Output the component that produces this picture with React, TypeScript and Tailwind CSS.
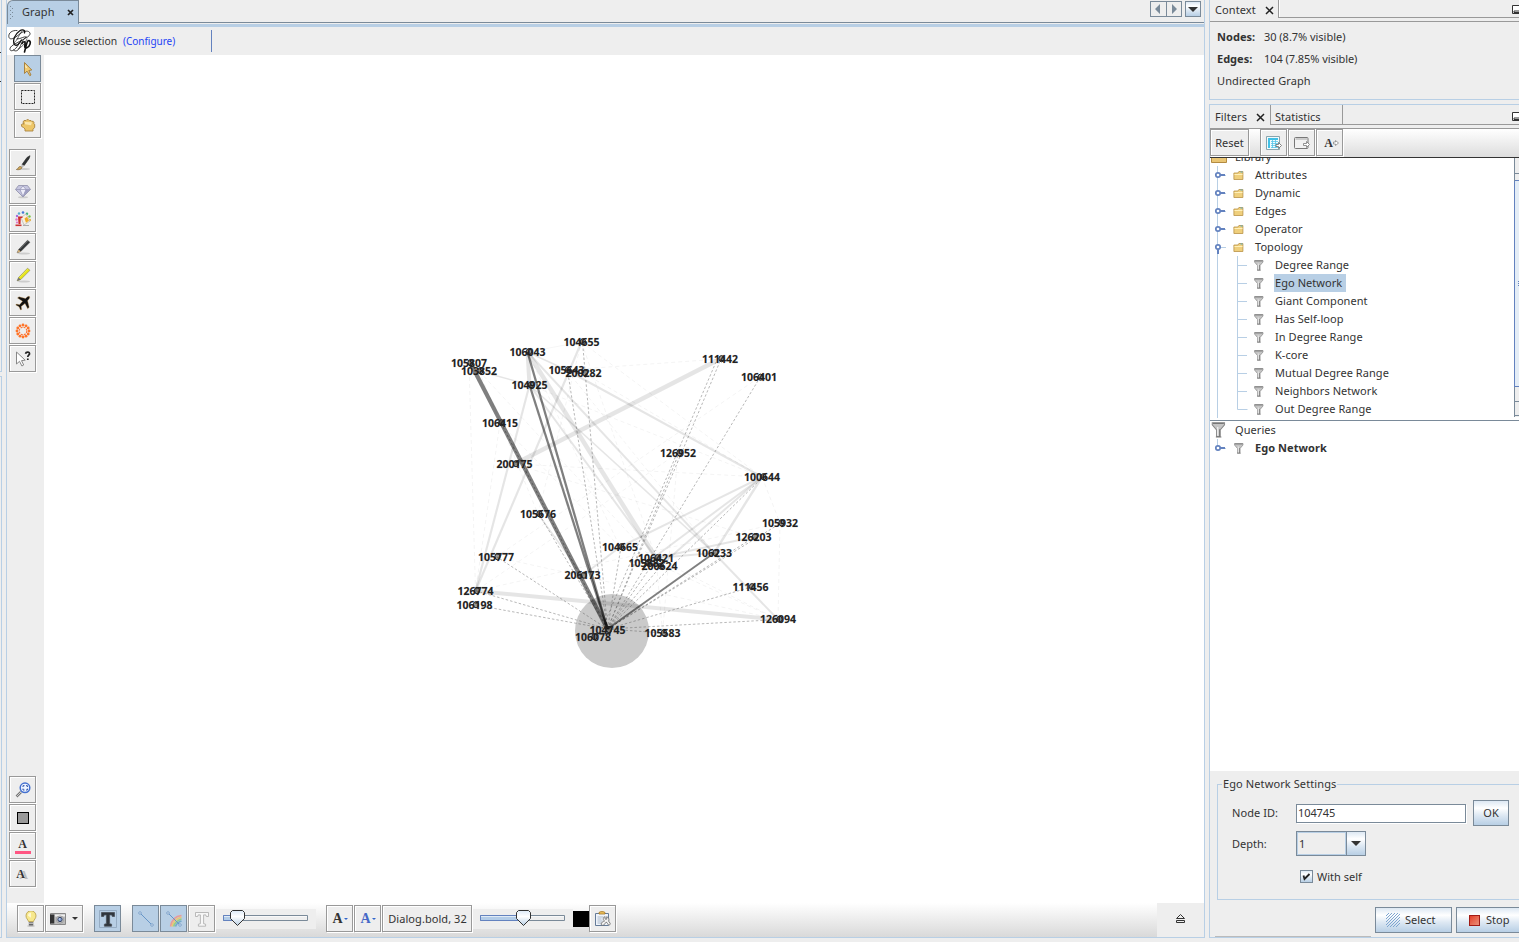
import type { ReactNode } from "react";

type Point = [number, number];

const nodes: Record<string, Point> = {
  "105807": [469, 363], "103852": [479, 371], "106043": [527.5, 352], "104655": [581.5, 342],
  "105643": [566.5, 370], "200282": [583.5, 373], "104925": [529.5, 385], "111442": [720, 359],
  "106401": [759, 377.5], "106415": [500, 423], "200175": [514.5, 464], "126952": [678, 453],
  "100644": [762, 477], "105676": [538, 514], "105932": [780, 523], "126203": [753.5, 537],
  "104665": [620, 547], "106421": [656, 558], "105882": [646.5, 563], "200624": [659.5, 566.5],
  "106233": [714, 553], "206173": [582.5, 575.5], "105777": [496, 557], "126774": [475.5, 591],
  "106198": [474.5, 605], "104745": [607.5, 630], "106078": [593, 637], "105583": [662.5, 633],
  "111456": [750.5, 587], "126094": [778, 619.5],
};

const soft: [string, string, number][] = [
  ["111442", "200175", 4.5], ["106043", "106421", 4.5], ["106043", "106233", 2], ["104925", "106421", 2],
  ["104925", "126774", 2.2], ["104655", "126774", 2.2], ["106043", "104925", 4], ["105643", "100644", 2],
  ["106043", "105643", 1.5], ["103852", "104925", 1.5], ["100644", "105882", 2], ["100644", "200624", 2],
  ["100644", "106233", 2.4], ["126203", "106421", 2], ["106233", "106421", 2], ["106233", "126094", 2],
  ["126774", "126094", 4], ["104665", "206173", 2], ["104925", "106233", 1.6], ["105676", "206173", 1.5],
  ["104655", "106043", 0.4], ["100644", "104665", 2],
];

const faint: [string, string][] = [
  ["105807", "126774"], ["103852", "200624"], ["105643", "111442"], ["104655", "100644"], ["200282", "100644"],
  ["104925", "100644"], ["106415", "104665"], ["106401", "105777"], ["126952", "126774"], ["200175", "100644"],
  ["105676", "104655"], ["105932", "126774"], ["105932", "126094"], ["106415", "126774"], ["105777", "126094"],
  ["104665", "126094"], ["106043", "104665"], ["105643", "106233"], ["100644", "105932"], ["106421", "105583"],
  ["104655", "106421"], ["126952", "105583"], ["103852", "105676"], ["200175", "126203"], ["106421", "126094"],
];

const dashed = [
  "104655", "105643", "111442", "106401", "126952", "100644", "111456", "126094", "105583", "105777", "126774",
  "106198", "105676", "104665", "106421", "200624", "105932", "126203", "106415",
];

function Graph() {
  const ego: Point = [607.5, 629];
  return (
    <svg className="block h-[848px] w-[1160px] shrink-0 bg-white" viewBox="44 55 1160 848" fontFamily='"Noto Sans", sans-serif'>
      <circle cx="612" cy="631" r="37" fill="#cacaca" />
      <g stroke="#000" strokeOpacity="0.1">
        {soft.map(([a, b, w]) => (
          <line key={a + b} x1={nodes[a][0]} y1={nodes[a][1]} x2={nodes[b][0]} y2={nodes[b][1]} strokeWidth={w} />
        ))}
      </g>
      <g stroke="#000" strokeOpacity="0.07" strokeWidth="0.7" strokeDasharray="4 3">
        {faint.map(([a, b]) => (
          <line key={a + b} x1={nodes[a][0]} y1={nodes[a][1]} x2={nodes[b][0]} y2={nodes[b][1]} />
        ))}
      </g>
      <g stroke="#444" strokeOpacity="0.7" strokeWidth="0.55" strokeDasharray="2.5 2">
        {dashed.map((id) => (
          <line key={id} x1={ego[0]} y1={ego[1]} x2={nodes[id][0] + 1} y2={nodes[id][1]} />
        ))}
        <line x1="602" y1="629" x2="716" y2="362" />
      </g>
      <g stroke="#000" strokeOpacity="0.5">
        <line x1={ego[0]} y1={ego[1]} x2="471" y2="364" strokeWidth="4.2" />
        <line x1={ego[0]} y1={ego[1]} x2="527.5" y2="352" strokeWidth="2.3" />
        <line x1={ego[0]} y1={ego[1]} x2="529.5" y2="385" strokeWidth="2.3" />
        <line x1={ego[0]} y1={ego[1]} x2="714" y2="553" strokeWidth="2" />
      </g>
      <g fill="#222" fontWeight="700" fontSize="10.5" textAnchor="middle">
        {Object.entries(nodes).map(([id, [x, y]]) => (
          <g key={id}>
            <text x={x} y={y + 3.6} textLength="36" lengthAdjust="spacingAndGlyphs" stroke="#222" strokeOpacity="0.3" strokeWidth="0.4">{id}</text>
            <ellipse cx={x + 1.5} cy={y - 0.3} rx="2.6" ry="3.1" fill="#222" fillOpacity="0.45" stroke="#222" strokeWidth="1" />
          </g>
        ))}
      </g>
    </svg>
  );
}

function Tool({ children, on = false, w = "w-[27px]" }: { children: ReactNode; on?: boolean; w?: string }) {
  return (
    <button
      className={`${w} ${on ? "border-[#7a8a99] bg-[#b8cfe5]" : "border-[#999] bg-[#eee] shadow-[inset_1px_1px_0_#fff,1px_1px_0_#fff]"} flex h-[27px] shrink-0 items-center justify-center border`}
    >
      {children}
    </button>
  );
}

function Ico({ children }: { children: ReactNode }) {
  return <svg className="block size-4 shrink-0" viewBox="0 0 16 16" fill="none">{children}</svg>;
}

const dotRing = [0, 1, 2, 3, 4, 5, 6, 7, 8, 9, 10, 11].map((i) => [8 + 6 * Math.cos((i * Math.PI) / 6), 8 + 6 * Math.sin((i * Math.PI) / 6)]);

const PointerIcon = () => (
  <Ico><path d="M4.500 1.500v11l2.500-2.400 2.800 4.600 1.200-.7-2.200-4.500 3-.5z" fill="#f1cb73" stroke="#a37b38" strokeWidth=".9" /><path d="M5.300 3.500v3l2 .5z" fill="#fff4cf" /></Ico>
);
const MarqueeIcon = () => <Ico><path d="M1.500 1.500h13v13h-13z" stroke="#222" strokeDasharray="2 1" /></Ico>;
const HandIcon = () => (
  <Ico><path d="M5 14v-2L3.500 10.500 1.700 9.500l-.3-2 1.600-.8 1 .5-1-2.200 1-1.500h2l.8-.8h1.700l.8.8h1.700l.7.800h1.500l.8 1.200-.3 1 1 .8v3l-1.700 2V14z" fill="#edc668" stroke="#a98542" strokeWidth=".9" /><path d="m5 5 7 .3-1 3-6-1z" fill="#fbe7ae" /></Ico>
);
const BrushIcon = () => (
  <Ico><ellipse cx="9" cy="14" rx="6" ry="1" fill="#ccc" /><path d="m7 9.500 5-7L15 .7l-1 3-5 7z" fill="#303436" stroke="#1b1b1b" strokeWidth=".6" /><path d="m5.500 11.500 2-2 1.700 1.300-1.600 2z" fill="#bbb" /><path d="M1.300 14.500c2 0 1.800-3.500 4.200-3 1.500.5 1.600 2 .4 2.500-1.400.8-3 .8-4.600.5z" fill="#cfa95b" stroke="#76582e" strokeWidth=".6" /></Ico>
);
const GemIcon = () => (
  <Ico><ellipse cx="8" cy="14.200" rx="5" ry="1" fill="#ccc" /><path d="M3.500 2.500h9l3 4L8 14 .5 6.500z" fill="#c5c5df" stroke="#8e8ea9" strokeWidth=".8" /><path d="M.8 6.500h14.400M5 6.500 8 13.500l3-7L8 3z" stroke="#9292b3" strokeWidth=".7" fill="#ededf9" /><path d="M11 6.500h4L8 13.500z" fill="#9b9bc0" /></Ico>
);
const PaintIcon = () => (
  <Ico>
    <circle cx="2" cy="5" r="1.200" fill="#a569dd" /><circle cx="4" cy="2.500" r="1.200" fill="#57acd0" /><circle cx="8" cy="1.500" r="1.300" fill="#4778d9" /><circle cx="12" cy="2.800" r="1.200" fill="#40b579" /><circle cx="14.500" cy="5.500" r="1.200" fill="#7cc944" /><circle cx="15" cy="9" r="1.200" fill="#e6b64a" /><circle cx="1.500" cy="8.500" r="1.200" fill="#e277ca" /><circle cx="2" cy="11.500" r="1.100" fill="#e277ca" />
    <path d="m6 6.500 5-3.500 4 7-6 4z" fill="#f8efdf" stroke="#aaa" strokeWidth=".6" /><path d="m9.500 7.500 2.500-1.700 2 4-3 2z" fill="#efab27" /><path d="M3 5.500h4.500v1.500H5.800L5.500 13H3.500z" fill="#cf2c2c" /><path d="M.500 14.300h6" stroke="#c33" strokeWidth="1.600" /><path d="M8 14.500h6" stroke="#aaa" />
  </Ico>
);
const PencilIcon = ({ color, tip }: { color: string; tip: string }) => (
  <Ico><ellipse cx="9" cy="14.500" rx="6" ry="1" fill="#ccc" /><path d="M2 14 3.500 10.500 12.500 1.200 15 3.300 5.800 12.500z" fill={color} stroke="#555" strokeWidth=".4" /><path d="M2 14 3.500 10.500 5.800 12.500z" fill={tip} /><path d="m5 10 8-8" stroke="#fff" strokeOpacity=".2" /></Ico>
);
const PlaneIcon = () => (
  <Ico><path d="M14.500 1.500c-1.200-.7-2.700.6-4 2L4 1.800 2.500 3l5 3.300-3 3.500L1.500 9 .8 10l3.200 1.700L5.500 15l1.200-.5-.5-3.100L10 8.500l2.700 5.200 1.500-1.400-1.600-6.600c1.500-1.400 2.600-3 1.900-4.200z" fill="#111" stroke="#d69c4b" strokeWidth=".35" /></Ico>
);
const RingIcon = () => (
  <Ico>{dotRing.map(([x, y], i) => <circle key={i} cx={x} cy={y} r="1.400" fill="#ff7428" />)}<circle cx="8" cy="8" r="3.800" stroke="#fb7536" strokeWidth="1.100" strokeDasharray="2 1" /></Ico>
);
const HelpPointerIcon = () => (
  <Ico><path d="M1.500 1v12l3-2.700 2.400 4.700 1.800-1-2.200-4.400 3.700-.4z" fill="#fff" stroke="#888" /><path d="M10.500 2.700C11 .5 15 .500 14.500 3c-.2 1.300-1.700 1.300-1.700 3M12.800 7.500v1.500" stroke="#222" strokeWidth="1.700" /></Ico>
);
const ZoomFitIcon = () => (
  <Ico><path d="m6 10-4.500 4.500" stroke="#777" strokeWidth="2.500" /><path d="m6 10-4.500 4.500" stroke="#ccc" /><circle cx="10" cy="5.800" r="4.800" fill="#edf3ff" stroke="#4471d0" strokeWidth="1.500" /><path d="M8 5V3.700h1.500m1.500 0h1.400V5m0 1.600V8H11M9.500 8H8V6.600" stroke="#2951a8" /></Ico>
);
const Letter = ({ children, className = "" }: { children: ReactNode; className?: string }) => (
  <span className={`${className} font-["Liberation_Serif",serif] font-bold leading-none`}>{children}</span>
);
const BulbIcon = () => (
  <Ico><ellipse cx="8" cy="15" rx="4" ry=".800" fill="#bbb" /><path d="M5.500 10.500C5 8.500 3 7.500 3 4.800a5 5 0 0 1 10 0c0 2.700-2 3.700-2.500 5.700z" fill="#f7e88d" stroke="#b49b45" strokeWidth=".8" /><path d="M5 4.800a3 3 0 0 1 3-3v5z" fill="#fff8cf" /><path d="M5.800 11h4.500v3.500H5.800z" fill="#666" /><path d="M5.500 12.200h5" stroke="#ddd" /></Ico>
);
const CameraIcon = () => (
  <Ico><path d="M.5 2.500h15v11H.5z" fill="#bbb" stroke="#888" /><path d="M0 3.500h4.300v9H0z" fill="#333" /><path d="M5 3.500h10v2H5z" fill="#eee" /><circle cx="10" cy="8.500" r="3.600" fill="#ddd" stroke="#777" strokeWidth=".6" /><circle cx="10" cy="8.500" r="2.200" fill="#7f99cc" stroke="#36435f" /><circle cx="9.500" cy="8" r=".8" fill="#cfe0ff" /></Ico>
);
const EdgeIcon = ({ rainbow = false }: { rainbow?: boolean }) => (
  <Ico>
    {rainbow && <g strokeWidth="1.600"><path d="M4.500 15.500C5.500 10 9 5 15.500 4.500" stroke="#e99a9a" /><path d="M6 15.500C7 11 10 7.500 15.500 6.300" stroke="#ecc674" /><path d="M7.700 15.500C8.500 12 11 9.500 15.500 8" stroke="#95cc8a" /><path d="M9.500 15.500c1-3 3-4.500 6-5.500" stroke="#75aaca" /></g>}
    <path d="m2 2 12 12" stroke="#6695c7" /><circle cx="2" cy="2" r="1.200" fill="#fff" stroke="#5a89bd" strokeWidth=".8" /><circle cx="14" cy="14" r="1.200" fill="#fff" stroke="#5a89bd" strokeWidth=".8" />
  </Ico>
);
const TIcon = ({ outline = false }: { outline?: boolean }) => (
  <svg className="block size-[18px] shrink-0" viewBox="-1 -1 18 18" fill="none">
    {!outline && <path d="M-.5-.5h17v17h-17z" stroke="#8ea4bb" strokeWidth=".8" />}
    <path d="M1.500 1.500h13v4h-2.200l-.5-1.600H9.600v8.800l2 .5v2H4.400v-2l2-.5V3.900H4.200l-.5 1.600H1.500z" fill={outline ? "#f7f7f7" : "#30363d"} stroke={outline ? "#aaa" : "#4b5259"} strokeWidth=".8" />
  </svg>
);
const ClipboardIcon = () => (
  <Ico><path d="M.5 2.500h13v12H.5z" fill="#eef3fa" stroke="#647b98" /><path d="M4 3V1.500C5 .3 9 .3 10 1.500V3z" fill="#edc25e" stroke="#a17525" strokeWidth=".8" /><path d="M2.500 6h6m-6 2h4m-4 2h5m-5 2h4" stroke="#9baabe" strokeWidth=".8" /><path d="M10 5.500c-2 1-2.500 3.300-.5 4.500-1.500.5-3.500 1.500-3.300 3.200.4 1.600 2.500 1.500 3.300 0l1.500-2c1.700 0 1.300 2 2.500 2.700 1 .5 2.200-.5 1.600-1.700l-1.400-2c.8-2-.2-3.900-2-4.500v2.500h-1.500z" fill="#f2f2f2" stroke="#666" strokeWidth=".8" /></Ico>
);
const TableIcon = () => (
  <Ico><path d="M.5 1.500h13v13H.500z" fill="#f2fbfd" stroke="#89a5ae" /><path d="M2 3h10v2H2zM2 5h2v8H2z" fill="#41c0e6" /><path d="M5 6.500h7M5 8.500h7M5 10.500h7M5 12.500h7M6.500 5v8M9.500 5v8" stroke="#57c5e9" strokeWidth=".8" /><path d="M10 9.500h2.500V7.500l3 3-3 3v-2H10z" fill="#fff" stroke="#666" strokeWidth=".8" /></Ico>
);
const WindowIcon = () => (
  <Ico><rect x=".5" y="2.500" width="13.500" height="11" rx="1" fill="#f2f2f2" stroke="#777" /><path d="M1.500 4h11.500" stroke="#ccc" strokeWidth="2" /><path d="M9.500 8.500h3v-2l3 3-3 3v-2h-3z" fill="#fff" stroke="#777" strokeWidth=".8" /></Ico>
);
const Caret = ({ className }: { className: string }) => <svg className={className} viewBox="0 0 10 5"><path d="M0 0h10L5 5z" fill="currentColor" /></svg>;
const Cross = () => <svg className="size-[9px] shrink-0 text-[#222]" viewBox="0 0 9 9"><path d="m1 1 7 7m0-7L1 8" stroke="currentColor" strokeWidth="1.500" /></svg>;
const Minimize = () => <svg className="h-[9px] w-[7px] shrink-0" viewBox="0 0 7 9"><path d="M.5.5h8v8h-8zM2 6h6v1.500H2z" fill="#fff" stroke="#333" /></svg>;

function Logo() {
  return (
    <svg className="h-7 w-[27px] shrink-0 bg-white" viewBox="0 0 27 28" fill="none">
      <g stroke="#111" strokeLinecap="round">
        <path d="M17.500 6c1-3-2-4-5-2C8 7 5 14 7.500 17.500c2 2 5-.5 7-4.500" strokeWidth="1.300" />
        <path d="M10 3.500C5 3 1.500 6 1.800 9.500c.4 3.500 3.800 2.500 6.700.8L14 6c3-2 8-3 9 .2.500 2.500-3 4.300-8 7C8 17 2.500 19 3 22.500c.7 3 6 .5 9-6" strokeWidth=".8" />
        <path d="M10 12c4 0 7-3 9.500-2-3 1-5 6-6.500 10-1.500 4-5 5-6.500 3" strokeWidth=".8" />
        <path d="M15 16.500c1.500-2.500 3.500-2.500 3 .5-.7 3-.3 4.500 1.500 4 3.500-1 5-6.500 2.500-7.500-1.500-.3-2 2-2.300 3L17.500 25" strokeWidth="1.600" />
        <path d="M15 4c-3 3-4 9-8 12M20 12c-2 5-5 8-9 10" strokeWidth=".6" />
      </g>
    </svg>
  );
}

function Slider({ thumb, className = "" }: { thumb: number; className?: string }) {
  return (
    <svg className={`${className} h-5 shrink-0 bg-[#eee]`} viewBox="0 0 100 20" width="100">
      <path d="M7.500 6.500h84v5h-84z" fill="#eee" stroke="#7a8a99" /><path d={`M7.500 6.500h${thumb - 7}v5h-${thumb - 7}z`} fill="#b2cce8" stroke="#6382bf" />
      <path d="M8 7.500h83" stroke="#fff" strokeOpacity=".6" />
      <path d={`M${thumb - 7} 3.500l2-2h10l2 2v6l-7 7-7-7z`} fill="url(#thumb)" stroke="#333" />
      <defs><linearGradient id="thumb" x2="0" y2="1"><stop stopColor="#dce9f7" /><stop offset=".4" stopColor="#fff" /><stop offset="1" stopColor="#b8cfe5" /></linearGradient></defs>
    </svg>
  );
}

const Funnel = () => (
  <g><path d="M.500 .5h8.500v1.500L6 5.500v4.500H3.500V5.500L.500 2z" fill="#c4c4c4" stroke="#888" strokeWidth=".7" /><path d="M1 1h7.500" stroke="#777" strokeWidth=".8" /><path d="M4.300 3.500v6" stroke="#f4f4f4" strokeWidth=".8" /><path d="M5.600 5v5M3 10.300h3.800" stroke="#777" strokeWidth=".7" /></g>
);
const Folder = () => (
  <g><path d="M.4 3h4l1-1.500h4v8h-9z" fill="#efcf7c" stroke="#b99245" strokeWidth=".8" /><path d="M1 4.500h8" stroke="#fff0ba" /><path d="M7 2h2" stroke="#55afd0" /></g>
);
const Handle = ({ open = false }: { open?: boolean }) => (
  <g><path d={open ? "M8 9v7" : "M8 9h7"} stroke="#6382bf" strokeWidth="2" /><circle cx="8" cy="9" r="2.200" fill="#fff" stroke="#6382bf" strokeWidth="1.700" /></g>
);

function Branch({ label, open = false }: { label: string; open?: boolean }) {
  return (
    <div className="flex h-[18px] items-center">
      <svg className="h-[18px] w-[45px] shrink-0" viewBox="0 0 45 18" fill="none">
        <path d="M7.500 0v18M8 9.500h8" stroke="#b8cfe5" /><Handle open={open} /><g transform="translate(23.500 4)"><Folder /></g>
      </svg>
      <span>{label}</span>
    </div>
  );
}

function Leaf({ label, last = false, selected = false }: { label: string; last?: boolean; selected?: boolean }) {
  return (
    <div className="flex h-[18px] items-center">
      <svg className="h-[18px] w-16 shrink-0" viewBox="0 0 64 18" fill="none">
        <path d={last ? "M7.500 0v18M27.500 0v9.500h10" : "M7.500 0v18M27.500 0v18M28 9.500h9"} stroke="#b8cfe5" /><g transform="translate(44 4)"><Funnel /></g>
      </svg>
      <span className={`${selected ? "bg-[#b8cfe5]" : ""} flex h-[18px] items-center pl-px pr-1`}>{label}</span>
    </div>
  );
}

const steel = "border border-[#7a8a99] bg-[linear-gradient(#dde8f3_0%,#fff_30%,#dde8f3_60%,#b8cfe5_100%)]";

function GraphPanel() {
  return (
    <section className="flex h-[938px] w-[1199px] shrink-0 flex-col border-x border-b border-[#b8cfe5]">
      <header className="flex h-6 shrink-0 items-start">
        <div className="flex h-6 w-[72px] items-center rounded-tl-md border-l border-r border-t border-[#7a8a99] bg-[#b8cfe5] pl-0.5">
          <svg className="h-3.5 w-1 shrink-0" viewBox="0 0 4 14"><path d="M.5 0v14M2.500 2v12" stroke="#7a8a99" strokeDasharray="1 3" /></svg>
          <span className="-mt-px ml-2 w-[45px] tracking-[0.1px]">Graph</span>
          <svg className="size-[7px]" viewBox="0 0 7 7"><path d="m1 1 5 5m0-5L1 6" stroke="#222" strokeWidth="1.700" /></svg>
        </div>
        <div className="flex h-[23px] flex-1 items-start justify-end border-b border-[#7a8a99] pr-[3px] pt-px">
          <div className="flex h-4 w-8 border border-[#7a8a99] text-[#7a8a99]">
            <svg className="h-3.5 w-[30px]" viewBox="0 0 30 14"><path d="M9 2v10L4 7zM21 2v10l5-5z" fill="currentColor" /><path d="M15.500 0v14" stroke="#7a8a99" /></svg>
          </div>
          <div className={`${steel} ml-[3px] flex h-4 w-4 items-center justify-center`}><Caret className="h-[5px] w-[10px]" /></div>
        </div>
      </header>
      <div className="h-[3px] shrink-0 bg-[#b8cfe5]" />
      <div className="flex h-7 shrink-0 items-center">
        <Logo /><span className="-mt-px ml-1 w-[85px] whitespace-nowrap text-[10.4px]">Mouse selection</span>
        <span className="w-[52px] text-[10px] tracking-[-0.03px] text-[#1f44f5]">(Configure)</span>
        <span className="ml-9 h-[22px] w-px bg-[#6382bf]" />
      </div>
      <div className="flex h-[848px] shrink-0">
        <aside className="flex w-[37px] shrink-0 flex-col">
          <div className="flex flex-col gap-px pl-[7px]"><Tool on><PointerIcon /></Tool><Tool><MarqueeIcon /></Tool><Tool><HandIcon /></Tool></div>
          <div className="mt-[11px] flex flex-col gap-px pl-0.5">
            <Tool><BrushIcon /></Tool><Tool><GemIcon /></Tool><Tool><PaintIcon /></Tool>
            <Tool><PencilIcon color="#333638" tip="#d5b27a" /></Tool><Tool><PencilIcon color="#e7e619" tip="#777" /></Tool>
            <Tool><PlaneIcon /></Tool><Tool><RingIcon /></Tool><Tool><HelpPointerIcon /></Tool>
          </div>
          <div className="mt-auto flex flex-col gap-px pb-4 pl-0.5">
            <Tool><ZoomFitIcon /></Tool>
            <Tool><span className="size-3 border border-black bg-[#999]" /></Tool>
            <Tool><span className="flex w-4 flex-col items-center border-b-[3px] border-[#ff5683] pb-px"><Letter className="text-[12px]">A</Letter></span></Tool>
            <Tool><Letter className="-ml-1 text-[12px] [text-shadow:3px_1px_0_#bbb]">A</Letter></Tool>
          </div>
        </aside>
        <Graph />
      </div>
      <footer className="flex h-[34px] shrink-0 items-start bg-linear-to-b from-white to-[#d9d9d9] pl-2.5 pt-0.5">
        <Tool><BulbIcon /></Tool>
        <span className="w-px" />
        <Tool w="w-[38px]"><CameraIcon /><Caret className="ml-1.5 h-[3px] w-[6px]" /></Tool>
        <span className="w-[11px]" /><Tool on><TIcon /></Tool><span className="w-[11px]" />
        <Tool on><EdgeIcon /></Tool><span className="w-px" /><Tool on><EdgeIcon rainbow /></Tool><span className="w-px" /><Tool><TIcon outline /></Tool>
        <Slider thumb={21.5} className="ml-px mt-[4px]" />
        <span className="w-[10px]" />
        <Tool><Letter className="ml-px text-[14px]">A</Letter><Caret className="ml-px h-[2px] w-1 text-[#36c]" /></Tool><span className="w-px" />
        <Tool><Letter className="ml-px text-[14px] text-[#4668c7]">A</Letter><Caret className="ml-px h-[2px] w-1 text-[#36c]" /></Tool><span className="w-px" />
        <Tool w="w-[90px]"><span className="pl-px tracking-[0.06px]">Dialog.bold, 32</span></Tool>
        <Slider thumb={50.5} className="ml-px mt-[4px]" />
        <span className="mt-[6px] h-4 w-4 bg-black" /><Tool><ClipboardIcon /></Tool>
        <div className="-mt-0.5 ml-auto flex h-[34px] w-[47px] items-center justify-center bg-[#eee]">
          <svg className="-mt-[3px] h-[9px] w-[9px]" viewBox="0 0 9 9" fill="none" stroke="#333"><path d="M.5 4.500 4.500.5l4 4zM.5 6.500h8v2h-8z" /></svg>
        </div>
      </footer>
    </section>
  );
}

function Context() {
  return (
    <section className="flex h-[100px] shrink-0 flex-col border-b border-l border-[#b8cfe5]">
      <header className="flex h-[18px]">
        <div className="flex w-[68px] items-center gap-2 pl-[5px] pt-0.5"><span className="w-[42px] tracking-[0.08px]">Context</span><Cross /></div>
        <div className="flex flex-1 items-center justify-end border-b border-l border-[#999] pt-px shadow-[inset_1px_0_#fff]"><Minimize /></div>
      </header>
      <div className="mt-[3px] flex flex-col gap-[6px] border-t border-[#999] pl-[7px] pt-[7px] leading-4">
        <p className="flex"><b className="w-[47px] tracking-[0.05px]">Nodes:</b><span className="tracking-[-0.03px]">30 (8.7% visible)</span></p>
        <p className="flex"><b className="w-[47px]">Edges:</b><span className="tracking-[-0.06px]">104 (7.85% visible)</span></p>
        <p className="tracking-[0.1px]">Undirected Graph</p>
      </div>
    </section>
  );
}

function Filters() {
  return (
    <section className="mt-1 flex h-[834px] shrink-0 flex-col border-b border-l border-t border-[#b8cfe5]">
      <header className="flex h-5 shrink-0">
        <div className="flex w-[60px] items-center gap-[7px] pl-[5px] pt-1"><span className="w-[34px] tracking-[0.1px]">Filters</span><Cross /></div>
        <div className="flex flex-1 border-b border-l border-[#999] pt-1">
          <span className="-mt-1 w-[72px] border-r border-[#999] pl-1 pt-1 leading-4">Statistics</span><span className="ml-auto pt-[3px]"><Minimize /></span>
        </div>
      </header>
      <div className="mt-[3px] flex h-[29px] shrink-0 border-t border-[#999] bg-linear-to-b from-white to-[#ddd]">
        <Tool w="w-[39px]">Reset</Tool><span className="w-[11px]" />
        <Tool><TableIcon /></Tool><span className="w-px" /><Tool><WindowIcon /></Tool><span className="w-px" />
        <Tool><Letter className="ml-1 text-[12px]">A</Letter><svg className="h-2 w-[6px]" viewBox="0 0 6 8"><path d="M.5 3h2V1.500l3 2.500-3 2.500V5h-2z" fill="#fff" stroke="#888" strokeWidth=".8" /></svg></Tool>
      </div>
      <div className="flex h-[264px] shrink-0 overflow-hidden border-b border-t border-b-[#7a8a99] border-t-[#333] bg-white">
        <div className="-mt-[10px] w-[304px] shrink-0 tracking-[0.06px]">
          <div className="flex h-[18px] items-center pl-px">
            <svg className="h-4 w-6" viewBox="0 0 24 16"><path d="M.5 3.500h8l2-2h5v12H.5z" fill="#e9c574" stroke="#b38b42" /></svg><span>Library</span>
          </div>
          <Branch label="Attributes" /><Branch label="Dynamic" /><Branch label="Edges" /><Branch label="Operator" /><Branch label="Topology" open />
          <Leaf label="Degree Range" /><Leaf label="Ego Network" selected /><Leaf label="Giant Component" /><Leaf label="Has Self-loop" />
          <Leaf label="In Degree Range" /><Leaf label="K-core" /><Leaf label="Mutual Degree Range" /><Leaf label="Neighbors Network" /><Leaf label="Out Degree Range" last />
        </div>
        <div className="flex h-[259px] w-[6px] shrink-0 flex-col border-l border-[#7a8a99] bg-[#eee]">
          <span className="h-4 shrink-0 border-b border-[#7a8a99]" /><span className="h-[7px] shrink-0 border-b border-[#6382bf]" />
          <span className="-ml-px flex h-[206px] shrink-0 items-center justify-end border-b border-l border-[#6382bf] bg-[#e4edf6]">
            <svg className="h-[5px] w-0.5" viewBox="0 0 2 5"><path d="M0 .5h2M0 2.500h2M0 4.500h2" stroke="#6382bf" /></svg>
          </span>
          <span className="h-[15px] shrink-0 border-b border-[#7a8a99]" /><span className="h-[14px] shrink-0 border-b border-[#7a8a99]" />
        </div>
      </div>
      <div className="h-[350px] shrink-0 bg-white tracking-[0.06px]">
        <div className="flex h-[18px] items-center">
          <svg className="h-[18px] w-[25px]" viewBox="0 0 25 18"><g transform="translate(1.500 1) scale(1.450)"><Funnel /></g></svg><span>Queries</span>
        </div>
        <div className="flex h-[18px] items-center">
          <svg className="h-[18px] w-[45px]" viewBox="0 0 45 18" fill="none"><path d="M7.500 0v9M8 9.500h8" stroke="#b8cfe5" /><Handle /><g transform="translate(24 4)"><Funnel /></g></svg><b>Ego Network</b>
        </div>
      </div>
      <div className="flex flex-1 flex-col pl-[7px] pt-[5px]">
        <fieldset className="h-[124px] border border-r-0 border-[#b8cfe5] pl-[14px]">
          <legend className="-ml-[10px] px-px leading-4 tracking-[0.1px]">Ego Network Settings</legend>
          <div className="mt-2 flex h-[26px] items-center">
            <label className="w-16 tracking-[0.06px]">Node ID:</label>
            <div className="flex h-[19px] w-[170px] items-center border border-[#7a8a99] bg-white pl-px tracking-[-0.1px] shadow-[1px_1px_0_#fff]">104745</div>
            <button className={`${steel} ml-[7px] h-[26px] w-9`}>OK</button>
          </div>
          <div className="mt-[5px] flex h-[25px] items-center">
            <label className="w-16">Depth:</label>
            <div className="flex h-[25px] w-[50px] items-center border border-r-0 border-[#7a8a99] pl-0.5 shadow-[inset_0_0_0_1px_#b8cfe5]">1</div>
            <div className={`${steel} flex h-[25px] w-5 items-center justify-center`}><Caret className="h-[5px] w-[10px]" /></div>
          </div>
          <div className="ml-[68px] mt-[13px] flex h-[15px] items-center">
            <span className={`${steel} mr-1 flex size-[13px] items-center justify-center`}><svg className="size-[9px]" viewBox="0 0 9 9"><path d="m1.500 3.500 1 3.500 5-5" fill="none" stroke="#222" strokeWidth="1.800" /></svg></span>With self
          </div>
        </fieldset>
        <div className="ml-[158px] mt-[7px] flex gap-1">
          <button className={`${steel} flex h-[26px] w-[77px] shrink-0 items-center gap-[5px] pl-2.5`}>
            <svg className="size-3.5" viewBox="0 0 14 14"><path d="m0 3 3-3M0 6l6-6M0 9l9-9M0 12 12 0M1 14 14 1M4 14 14 4M7 14l7-7M10 14l4-4" stroke="#7ea5d0" /></svg>Select
          </button>
          <button className={`${steel} flex h-[26px] w-[77px] shrink-0 items-center gap-[6px] pl-3`}><span className="size-[11px] border border-[#a11b15] bg-linear-to-br from-[#e33a25] to-[#e98e78]" />Stop</button>
        </div>
        <span className="-ml-[2px] mt-auto h-px w-[156px] bg-[#bbb]" />
      </div>
    </section>
  );
}

export default function App() {
  return (
    <main className='flex h-[942px] w-[1519px] overflow-hidden bg-[#eee] font-["Noto_Sans",sans-serif] text-[11px] leading-[16px] text-[#333]'>
      <div className="flex h-[938px] w-1.5 shrink-0 flex-col gap-1 pr-1">
        <div className="flex h-[372px] shrink-0 flex-col border-b border-r border-[#b8cfe5]"><span className="h-[52px]" /><span className="h-[30px] w-px border-y border-[#333]" /></div>
        <div className="flex-1 border-b border-r border-t border-[#b8cfe5]" />
      </div>
      <GraphPanel />
      <div className="ml-1 flex min-w-0 flex-1 flex-col"><Context /><Filters /></div>
    </main>
  );
}
